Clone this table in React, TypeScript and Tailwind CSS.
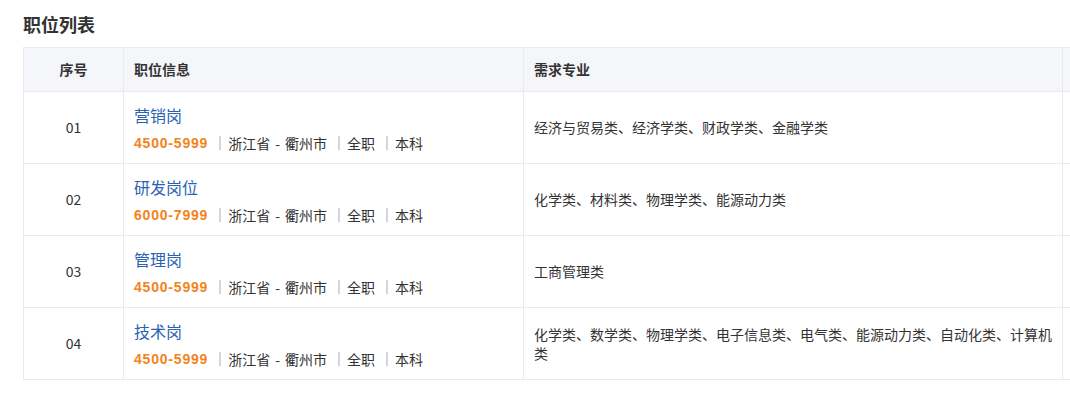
import React from "react";

const jobs = [
  { no: "01", name: "营销岗", salary: "4500-5999", majors: "经济与贸易类、经济学类、财政学类、金融学类" },
  { no: "02", name: "研发岗位", salary: "6000-7999", majors: "化学类、材料类、物理学类、能源动力类" },
  { no: "03", name: "管理岗", salary: "4500-5999", majors: "工商管理类" },
  { no: "04", name: "技术岗", salary: "4500-5999", majors: "化学类、数学类、物理学类、电子信息类、电气类、能源动力类、自动化类、计算机类" },
];

function Sep() {
  return <span className="inline-block w-[2px] h-[14px] bg-[#d6d6d6] ml-[11px] mr-[7px]" />;
}

export default function App() {
  return (
    <div
      className="w-[1070px] h-[395px] overflow-hidden bg-white text-[#333]"
      style={{ fontFamily: '"Noto Sans CJK SC", "Liberation Sans", sans-serif' }}
    >
      <div className="pl-[23px] pt-[11px]">
        <h2 className="text-[18px] leading-[26px] font-bold text-[#333] mb-[10px]">职位列表</h2>
        <div className="grid grid-cols-[100px_400px_539px_200px] w-[1239px] border-l border-t border-[#e8eaef]">
          <div className="h-[44px] bg-[#f5f6fa] border-r border-b border-[#e8eaef] flex items-center justify-center text-[14px] font-bold">序号</div>
          <div className="h-[44px] bg-[#f5f6fa] border-r border-b border-[#e8eaef] flex items-center pl-[10px] text-[14px] font-bold">职位信息</div>
          <div className="h-[44px] bg-[#f5f6fa] border-r border-b border-[#e8eaef] flex items-center pl-[10px] text-[14px] font-bold">需求专业</div>
          <div className="h-[44px] bg-[#f5f6fa] border-r border-b border-[#e8eaef]" />
          {jobs.map((j) => (
            <React.Fragment key={j.no}>
              <div className="h-[72px] border-r border-b border-[#e8eaef] flex items-center justify-center text-[14px] text-[#333]">{j.no}</div>
              <div className="h-[72px] border-r border-b border-[#e8eaef] flex flex-col justify-center pl-[10px] gap-[6px]">
                <div className="text-[16px] leading-[24px] text-[#2a63b4]">{j.name}</div>
                <div className="flex items-center text-[14px] leading-[20px] text-[#333]">
                  <span
                    className="font-bold text-[#f28420] text-[14px] tracking-[0.8px]"
                    style={{ fontFamily: '"Liberation Sans", sans-serif' }}
                  >
                    {j.salary}
                  </span>
                  <Sep />
                  <span>浙江省</span>
                  <span className="px-[5px]">-</span>
                  <span>衢州市</span>
                  <Sep />
                  <span>全职</span>
                  <Sep />
                  <span>本科</span>
                </div>
              </div>
              <div className="h-[72px] border-r border-b border-[#e8eaef] flex items-center pl-[10px] pr-[10px] text-[14px] leading-[19px] text-[#333]">
                <span>{j.majors}</span>
              </div>
              <div className="h-[72px] border-r border-b border-[#e8eaef]" />
            </React.Fragment>
          ))}
        </div>
      </div>
    </div>
  );
}
